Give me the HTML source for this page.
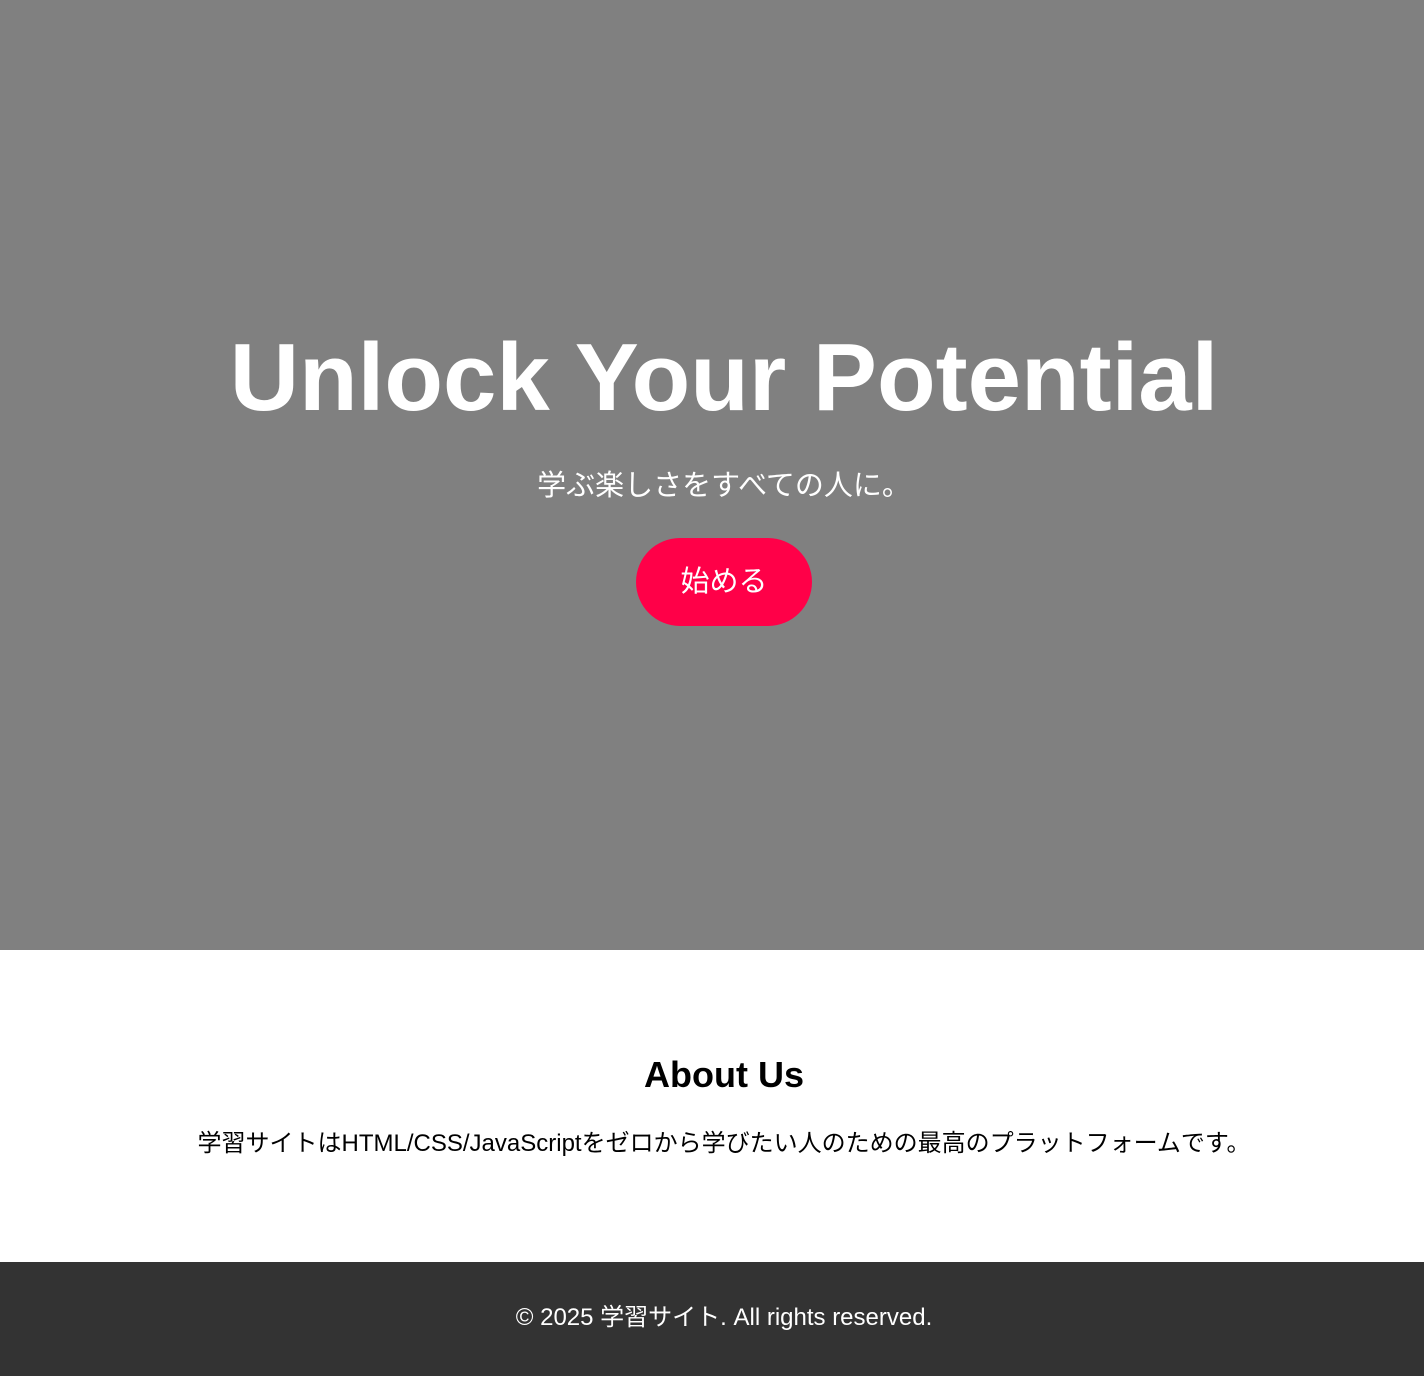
<!DOCTYPE html>
<html lang="ja">
<head>
<meta charset="utf-8">
<style>
  html,body{margin:0;padding:0;}
  body{width:1424px;height:1376px;position:relative;overflow:hidden;background:#fff;
    font-family:"Liberation Sans","Noto Sans CJK JP",sans-serif;}
  .c{position:absolute;left:24px;width:1400px;text-align:center;margin:0;}
  .hero{position:absolute;left:0;top:0;width:1424px;height:950px;background:#808080;color:#fff;}
  .hero h1{top:318px;font-size:96px;font-weight:bold;line-height:120px;}
  .hero p{top:466px;font-size:29px;line-height:40px;}
  .btn{position:absolute;left:636px;top:538px;width:176px;height:88px;border-radius:44px;background:#ff0048;
    color:#fff;font-size:29px;line-height:88px;text-align:center;}
  .about h2{top:1052px;font-size:36px;font-weight:bold;line-height:46px;color:#000;}
  .about p{top:1128px;font-size:24px;line-height:32px;color:#000;}
  footer{position:absolute;left:0;top:1262px;width:1424px;height:114px;background:#333;color:#fff;}
  footer div{top:0;font-size:24px;line-height:112px;}
</style>
</head>
<body>
  <div class="hero">
    <h1 class="c">Unlock Your Potential</h1>
    <p class="c">学ぶ楽しさをすべての人に。</p>
    <div class="btn">始める</div>
  </div>
  <div class="about">
    <h2 class="c">About Us</h2>
    <p class="c">学習サイトはHTML/CSS/JavaScriptをゼロから学びたい人のための最高のプラットフォームです。</p>
  </div>
  <footer><div class="c">© 2025 学習サイト. All rights reserved.</div></footer>
</body>
</html>
